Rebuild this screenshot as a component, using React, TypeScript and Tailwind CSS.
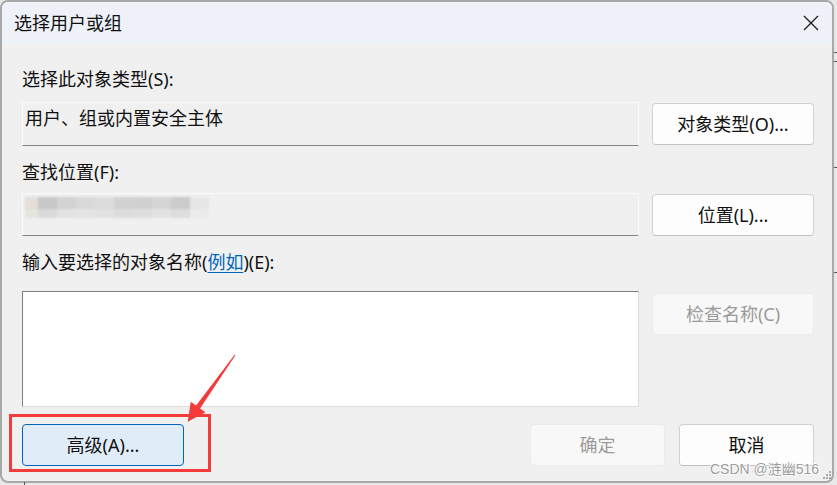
const TOP_ROW = ["#e2ded8", "#c7c7c7", "#d3d3d3", "#d9d9d9", "#dcdcdc", "#d1d1d1", "#d0d0d0", "#d5d5d5", "#cbcbcb", "#e6e6e6"];
const BOTTOM_ROW = ["#e6e4e1", "#dadada", "#e2e2e2", "#e4e4e4", "#e1e1e1", "#dcdcdc", "#dedede", "#e2e2e2", "#dddddd", "#ebebeb"];

function Btn({ children, disabled = false, className = "" }: { children: React.ReactNode; disabled?: boolean; className?: string }) {
  return (
    <div
      className={`flex h-[42px] shrink-0 items-center justify-center rounded-[4px] border text-[18px] leading-none ${
        disabled ? "border-[#ebebeb] bg-[#f8f8f8] text-[#9b9b9b]" : "border-[#d1d1d1] border-b-[#c2c2c2] bg-[#fdfdfd] text-[#111]"
      } ${className}`}
    >
      {children}
    </div>
  );
}

function Label({ children, className = "" }: { children: React.ReactNode; className?: string }) {
  return <div className={`flex h-[24px] items-center text-[18px] leading-[24px] text-[#111] ${className}`}>{children}</div>;
}

export default function App() {
  return (
    <div className="relative h-[485px] w-[837px] overflow-hidden bg-[#e8e8e8] font-['Noto_Sans','Noto_Sans_CJK_SC',sans-serif]">
      <div className="flex h-[483px] w-[834px] flex-col overflow-hidden rounded-[8px] border-2 border-[#a8a8a8] bg-[#f0f0f0]">
        {/* 标题栏 */}
        <div className="flex h-[42px] shrink-0 items-center justify-between bg-[#eef2f8] pl-[12px] pr-[14px]">
          <span className="text-[18px] leading-none text-[#111]">选择用户或组</span>
          <svg width="16" height="16" viewBox="0 0 16 16" className="mr-[-1px]">
            <path d="M1 1 L15 15 M15 1 L1 15" stroke="#1a1a1a" strokeWidth="1.3" fill="none" />
          </svg>
        </div>

        <div className="flex flex-col pl-[20px] pr-[18px]">
          <Label className="mt-[23px]">选择此对象类型(S):</Label>
          <div className="mt-[11px] flex h-[44px] items-center gap-[13px]">
            <div className="h-[44px] w-[617px] border border-[#fafafa] border-b-[#858585] pl-[2px] pt-[3px] text-[18px] leading-[24px] text-[#111]">
              用户、组或内置安全主体
            </div>
            <Btn className="w-[162px]">对象类型(O)...</Btn>
          </div>

          <Label className="mt-[14px]">查找位置(F):</Label>
          <div className="mt-[9px] flex h-[43px] items-center gap-[13px]">
            <div className="h-[43px] w-[617px] border border-[#fafafa] border-b-[#858585] pl-[2px] pt-[3px]">
              <div className="flex w-fit flex-col blur-[1.2px]">
                <div className="flex h-[12px]">
                  {TOP_ROW.map((c, i) => (
                    <span key={i} className={i === 0 ? "w-[13px]" : "w-[19px]"} style={{ background: c }} />
                  ))}
                </div>
                <div className="flex h-[9px]">
                  {BOTTOM_ROW.map((c, i) => (
                    <span key={i} className={i === 0 ? "w-[13px]" : "w-[19px]"} style={{ background: c }} />
                  ))}
                </div>
              </div>
            </div>
            <Btn className="w-[162px]">位置(L)...</Btn>
          </div>

          <Label className="mt-[14px]">
            输入要选择的对象名称(<span className="text-[#0067c0] underline underline-offset-[3px]">例如</span>)(E):
          </Label>
          <div className="mt-[17px] flex gap-[13px]">
            <div className="h-[116px] w-[617px] border border-[#7f7f7f] border-b-[#dcdcdc] border-r-[#dcdcdc] bg-white" />
            <Btn disabled className="mt-[2px] w-[162px]">检查名称(C)</Btn>
          </div>

          <div className="mt-[17px] flex items-center">
            <Btn className="w-[162px] !border-[#0067c0] !bg-[#e0ecf8]">高级(A)...</Btn>
            <div className="flex-1" />
            <Btn disabled className="w-[135px]">确定</Btn>
            <Btn className="ml-[14px] w-[135px]">取消</Btn>
          </div>
        </div>
      </div>

      {/* 背景窗口的边缘 */}
      <div className="absolute left-[834px] top-[52px] h-px w-[3px] bg-[#555]" />
      <div className="absolute left-[834px] top-[61px] h-px w-[3px] bg-[#555]" />
      <div className="absolute left-[834px] top-[167px] h-px w-[3px] bg-[#555]" />
      <div className="absolute left-[834px] top-[272px] h-px w-[3px] bg-[#555]" />
      <div className="absolute left-[24px] top-[482px] h-[3px] w-px bg-[#555]" />

      {/* 缩放手柄 */}
      <svg className="absolute left-[822px] top-[471px]" width="10" height="10" viewBox="0 0 10 10">
        {[[7, 0], [4, 3], [7, 3], [1, 6], [4, 6], [7, 6]].map(([x, y], i) => (
          <rect key={i} x={x} y={y} width="2" height="2" fill="#a9a9a9" />
        ))}
      </svg>

      {/* 标注 */}
      <div className="pointer-events-none absolute left-[9px] top-[414px] h-[58px] w-[202px] border-[3px] border-[#f43b3b]" />
      <svg className="pointer-events-none absolute left-0 top-0" width="837" height="485">
        <polygon
          points="234.6,354.7 196.1,405.6 190.8,401.8 187.7,421.7 205.4,412.2 200.1,408.4 235.4,355.3"
          fill="#f43b3b"
        />
      </svg>

      <div className="absolute left-[710px] top-[460px] font-['Liberation_Sans','Noto_Sans_CJK_SC',sans-serif] text-[14px] leading-[18px] text-[#9c9c9c] [text-shadow:1px_0_0_#fff,-1px_0_0_#fff,0_1px_0_#fff,0_-1px_0_#fff]">
        CSDN @涟幽516
      </div>
    </div>
  );
}
